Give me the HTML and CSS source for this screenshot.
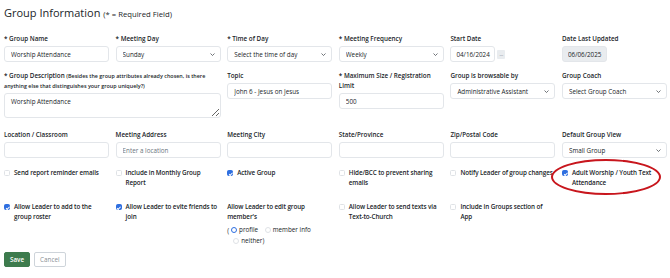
FILE: index.html
```html
<!DOCTYPE html>
<html>
<head>
    <title>Group Information</title>
    <link rel="stylesheet" href="styles.css">
</head>
<body>
    <div class="container">
        <h4 class="page-title">Group Information <small>(* = Required Field)</small></h4>

        <div class="form-row">
            <div class="field">
                <label for="group-name">* Group Name</label>
                <input id="group-name" class="form-control" type="text" value="Worship Attendance">
            </div>
            <div class="field">
                <label for="meeting-day">* Meeting Day</label>
                <div class="select-wrap">
                    <select id="meeting-day" class="form-select"><option>Sunday</option></select>
                    <svg class="chevron" width="5" height="3" viewBox="0 0 5 3"><path d="M0.5 0.5 L2.5 2.5 L4.5 0.5" fill="none" stroke="#343a40" stroke-width="0.7"/></svg>
                </div>
            </div>
            <div class="field">
                <label for="time-of-day">* Time of Day</label>
                <div class="select-wrap">
                    <select id="time-of-day" class="form-select"><option>Select the time of day</option></select>
                    <svg class="chevron" width="5" height="3" viewBox="0 0 5 3"><path d="M0.5 0.5 L2.5 2.5 L4.5 0.5" fill="none" stroke="#343a40" stroke-width="0.7"/></svg>
                </div>
            </div>
            <div class="field">
                <label for="frequency">* Meeting Frequency</label>
                <div class="select-wrap">
                    <select id="frequency" class="form-select"><option>Weekly</option></select>
                    <svg class="chevron" width="5" height="3" viewBox="0 0 5 3"><path d="M0.5 0.5 L2.5 2.5 L4.5 0.5" fill="none" stroke="#343a40" stroke-width="0.7"/></svg>
                </div>
            </div>
            <div class="field">
                <label for="start-date">Start Date</label>
                <div class="date-group">
                    <input id="start-date" class="form-control date-input" type="text" value="04/16/2024">
                    <button class="picker-btn" type="button">...</button>
                </div>
            </div>
            <div class="field">
                <label for="last-updated">Date Last Updated</label>
                <input id="last-updated" class="form-control date-input" type="text" value="06/06/2025" readonly>
            </div>
        </div>

        <div class="form-row">
            <div class="field span-2">
                <label for="description">* Group Description <span class="hint">(Besides the group attributes already chosen, is there anything else that distinguishes your group uniquely?)</span></label>
                <textarea id="description" class="form-control">Worship Attendance</textarea>
            </div>
            <div class="field">
                <label for="topic">Topic</label>
                <input id="topic" class="form-control" type="text" value="John 6 - Jesus on Jesus">
            </div>
            <div class="field">
                <label for="max-size">* Maximum Size / Registration Limit</label>
                <input id="max-size" class="form-control" type="text" value="500">
            </div>
            <div class="field">
                <label for="browsable">Group is browsable by</label>
                <div class="select-wrap">
                    <select id="browsable" class="form-select"><option>Administrative Assistant</option></select>
                    <svg class="chevron" width="5" height="3" viewBox="0 0 5 3"><path d="M0.5 0.5 L2.5 2.5 L4.5 0.5" fill="none" stroke="#343a40" stroke-width="0.7"/></svg>
                </div>
            </div>
            <div class="field">
                <label for="coach">Group Coach</label>
                <div class="select-wrap">
                    <select id="coach" class="form-select"><option>Select Group Coach</option></select>
                    <svg class="chevron" width="5" height="3" viewBox="0 0 5 3"><path d="M0.5 0.5 L2.5 2.5 L4.5 0.5" fill="none" stroke="#343a40" stroke-width="0.7"/></svg>
                </div>
            </div>
        </div>

        <div class="form-row">
            <div class="field">
                <label for="location">Location / Classroom</label>
                <input id="location" class="form-control" type="text">
            </div>
            <div class="field">
                <label for="address">Meeting Address</label>
                <input id="address" class="form-control" type="text" placeholder="Enter a location">
            </div>
            <div class="field">
                <label for="city">Meeting City</label>
                <input id="city" class="form-control" type="text">
            </div>
            <div class="field">
                <label for="state">State/Province</label>
                <input id="state" class="form-control" type="text">
            </div>
            <div class="field">
                <label for="zip">Zip/Postal Code</label>
                <input id="zip" class="form-control" type="text">
            </div>
            <div class="field">
                <label for="default-view">Default Group View</label>
                <div class="select-wrap">
                    <select id="default-view" class="form-select"><option>Small Group</option></select>
                    <svg class="chevron" width="5" height="3" viewBox="0 0 5 3"><path d="M0.5 0.5 L2.5 2.5 L4.5 0.5" fill="none" stroke="#343a40" stroke-width="0.7"/></svg>
                </div>
            </div>
        </div>

        <div class="form-row check-row">
            <label class="check"><input type="checkbox"><span>Send report reminder emails</span></label>
            <label class="check"><input type="checkbox"><span>Include in Monthly Group Report</span></label>
            <label class="check"><input type="checkbox" checked><span>Active Group</span></label>
            <label class="check"><input type="checkbox"><span>Hide/BCC to prevent sharing emails</span></label>
            <label class="check"><input type="checkbox"><span>Notify Leader of group changes</span></label>
            <label class="check circled"><input type="checkbox" checked><span>Adult Worship / Youth Text Attendance</span><span class="ring"></span></label>
        </div>

        <div class="form-row check-row last">
            <label class="check"><input type="checkbox" checked><span>Allow Leader to add to the group roster</span></label>
            <label class="check"><input type="checkbox" checked><span>Allow Leader to evite friends to join</span></label>
            <div class="edit-rights">
                <div class="edit-title">Allow Leader to edit group member's</div>
                <div class="radio-line">
                    (<label class="radio"><input type="radio" name="edit" checked>profile</label>
                    <label class="radio"><input type="radio" name="edit">member info</label>
                    <label class="radio"><input type="radio" name="edit">neither)</label>
                </div>
            </div>
            <label class="check"><input type="checkbox"><span>Allow Leader to send texts via Text-to-Church</span></label>
            <label class="check"><input type="checkbox"><span>Include in Groups section of App</span></label>
        </div>

        <div class="button-group">
            <button class="btn btn-save" type="button">Save</button>
            <button class="btn btn-cancel" type="button">Cancel</button>
        </div>
    </div>
</body>
</html>
```

FILE: styles.css
```css
html, body {
    margin: 0;
    padding: 0;
    background-color: white;
}
body {
    font-family: "Open Sans", "Noto Sans", sans-serif;
    font-size: 6.3px;
    line-height: 10px;
    color: #212529;
}
.container {
    padding: 0 3px 0 4px;
}
.page-title {
    margin: 6px 0 13px;
    font-size: 11px;
    line-height: 13px;
    font-weight: 400;
}
.page-title small {
    font-size: 7.7px;
}
.form-row {
    display: grid;
    grid-template-columns: repeat(6, 1fr);
    column-gap: 6.6px;
    margin-bottom: 9px;
}
.field {
    min-width: 0;
}
.span-2 {
    grid-column: span 2;
}
.field label {
    display: block;
    font-weight: 600;
    margin-bottom: 2px;
}
.hint {
    font-size: 5.4px;
    line-height: 10px;
}
.form-control,
.form-select {
    display: block;
    box-sizing: border-box;
    width: 100%;
    height: 16px;
    padding: 0 6px;
    border: 1px solid #e3e6ea;
    border-radius: 3px;
    background-color: white;
    font-family: inherit;
    font-size: 6.3px;
    color: #212529;
    outline: none;
}
.form-control::placeholder {
    color: #6c757d;
}
textarea.form-control {
    height: 25px;
    padding: 3px 6px;
    margin-bottom: 3px;
    line-height: 10px;
    resize: vertical;
}
.form-select {
    appearance: none;
    padding-right: 14px;
}
.select-wrap {
    position: relative;
}
.chevron {
    position: absolute;
    right: 6px;
    top: 7px;
}
.date-group {
    display: flex;
    align-items: center;
    gap: 2px;
}
.date-input {
    width: 45px;
    padding: 0 3px 0 5px;
}
#last-updated {
    background-color: #e9ecef;
}
.picker-btn {
    width: 8px;
    height: 9px;
    padding: 0;
    border: none;
    border-radius: 1px;
    background-color: #e9ecef;
    color: #6c757d;
    font-size: 5px;
    line-height: 6px;
    font-family: inherit;
}
.check-row {
    margin-top: 10px;
    margin-bottom: 14px;
}
.check-row.last {
    margin-bottom: 5px;
}
.check {
    display: flex;
    align-items: flex-start;
    gap: 4px;
    font-weight: 600;
    letter-spacing: -0.1px;
    min-width: 0;
}
.check input {
    appearance: none;
    flex-shrink: 0;
    box-sizing: border-box;
    width: 6px;
    height: 6px;
    margin: 2px 0 0;
    border: 0.6px solid #dfe2e6;
    border-radius: 1.5px;
    background-color: white;
    position: relative;
}
.check input:checked {
    background-color: #2f6fe0;
    border-color: #2f6fe0;
}
.check input:checked::after {
    content: "";
    position: absolute;
    left: 1.6px;
    top: 0.5px;
    width: 1.3px;
    height: 2.5px;
    border-right: 0.8px solid white;
    border-bottom: 0.8px solid white;
    transform: rotate(45deg);
}
.circled {
    position: relative;
}
.ring {
    position: absolute;
    left: -11px;
    top: -9px;
    width: 110px;
    height: 36px;
    box-sizing: border-box;
    border: 2px solid #c8161d;
    border-radius: 50%;
    pointer-events: none;
}
.edit-title {
    font-weight: 600;
    letter-spacing: -0.1px;
}
.radio-line {
    margin-top: 3px;
    padding-left: 4px;
    text-indent: -4px;
}
.radio {
    display: inline-flex;
    align-items: center;
    gap: 2px;
    margin-left: 2px;
    margin-right: 3px;
    text-indent: 0;
}
.radio input {
    appearance: none;
    box-sizing: border-box;
    width: 6px;
    height: 6px;
    margin: 0;
    border: 0.6px solid #dfe2e6;
    border-radius: 50%;
    background-color: white;
}
.radio input:checked {
    border: 1.6px solid #2f6fe0;
}
.button-group {
    display: flex;
    gap: 4px;
}
.btn {
    height: 15px;
    padding: 0 5px;
    border-radius: 2px;
    font-family: inherit;
    font-size: 6.3px;
    cursor: pointer;
}
.btn-save {
    border: 1px solid #3d7b4d;
    background-color: #3d7b4d;
    color: white;
    font-weight: 600;
}
.btn-cancel {
    border: 1px solid #ced4da;
    background-color: white;
    color: #8a9096;
}
```
